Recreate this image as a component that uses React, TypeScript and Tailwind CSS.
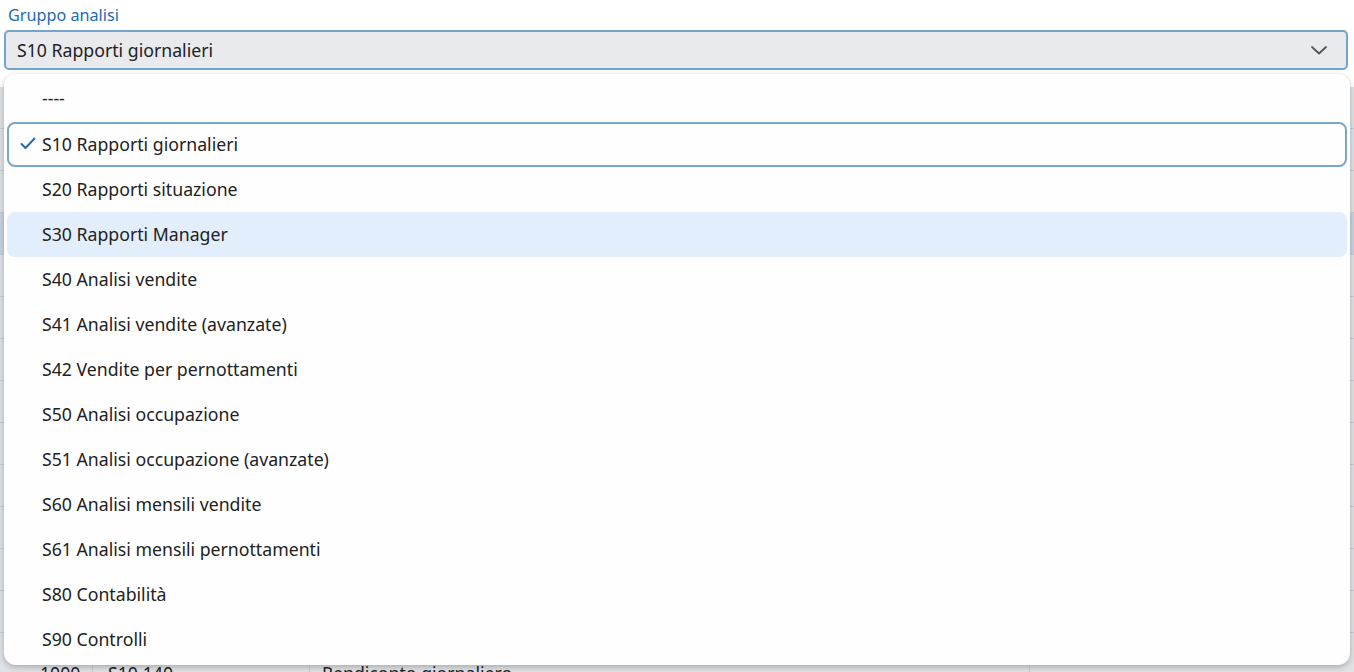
import React from "react";

const items = [
  "----",
  "S10 Rapporti giornalieri",
  "S20 Rapporti situazione",
  "S30 Rapporti Manager",
  "S40 Analisi vendite",
  "S41 Analisi vendite (avanzate)",
  "S42 Vendite per pernottamenti",
  "S50 Analisi occupazione",
  "S51 Analisi occupazione (avanzate)",
  "S60 Analisi mensili vendite",
  "S61 Analisi mensili pernottamenti",
  "S80 Contabilità",
  "S90 Controlli",
];

export default function App() {
  const rows = Array.from({ length: 13 });
  return (
    <div
      className="relative w-[1354px] h-[672px] overflow-hidden bg-white text-[#222]"
      style={{ fontFamily: '"Noto Sans", "Open Sans", sans-serif' }}
    >
      <div className="px-[8px] pt-[5px] text-[16.2px] leading-[21px] text-[#1a6bb0]">Gruppo analisi</div>
      <div className="mx-[4px] mt-[4px] h-[40px] w-[1344px] rounded-[5px] border-2 border-[#76a3c8] bg-[#e8eaee] flex items-center justify-between pl-[11px] pr-[18px]">
        <span className="text-[17.7px] text-[#222]">S10 Rapporti giornalieri</span>
        <svg width="18" height="12" viewBox="0 0 18 12" fill="none">
          <polyline points="2,3 9,9.5 16,3" stroke="#555" strokeWidth="1.8" strokeLinecap="round" strokeLinejoin="round" />
        </svg>
      </div>

      {/* background table */}
      <div className="mt-[17px] bg-[#dfe2e6]">
        {rows.map((_, i) => (
          <div
            key={i}
            className={`flex h-[42px] border-b border-[#c9cdd3] ${i === 3 ? "bg-[#c9d3e2]" : ""}`}
          >
            <div className="w-[93px] border-r border-[#c9cdd3]" />
            <div className="w-[217px] border-r border-[#c9cdd3]" />
            <div className="w-[720px] border-r border-[#c9cdd3]" />
            <div className="flex-1" />
          </div>
        ))}
        <div className="flex h-[60px] text-[17.7px] leading-[24px]">
          <div className="w-[93px] border-r border-[#c9cdd3] pl-[40px] pt-[28px]">1000</div>
          <div className="w-[217px] border-r border-[#c9cdd3] pl-[15px] pt-[28px]">S10.140</div>
          <div className="w-[720px] border-r border-[#c9cdd3] pl-[12px] pt-[28px]">Rendiconto giornaliero</div>
          <div className="flex-1" />
        </div>
      </div>

      {/* dropdown */}
      <div className="absolute left-[4px] top-[74px] w-[1346px] h-[591px] rounded-[12px] bg-[#fefefe] px-[3px] pt-[3px] shadow-[0_2px_6px_rgba(0,0,0,0.25)]">
        {items.map((t, i) => {
          const selected = i === 1;
          const hover = i === 3;
          return (
            <div
              key={t}
              className={`relative flex h-[45px] items-center rounded-[8px] text-[17.7px] text-[#222] ${
                selected ? "border-2 border-[#7aa6ca] pl-[33px]" : "pl-[35px]"
              } ${hover ? "bg-[#e2eefc]" : ""}`}
            >
              {selected && (
                <svg className="absolute left-[11px] top-[13px]" width="16" height="13" viewBox="0 0 16 13" fill="none">
                  <polyline points="1.5,7 5.5,11 14.5,1.5" stroke="#1f6db3" strokeWidth="2" strokeLinecap="round" strokeLinejoin="round" />
                </svg>
              )}
              <span className={i === 0 ? "-mt-[2px]" : "-mt-[1px]"}>{t}</span>
            </div>
          );
        })}
      </div>
    </div>
  );
}
